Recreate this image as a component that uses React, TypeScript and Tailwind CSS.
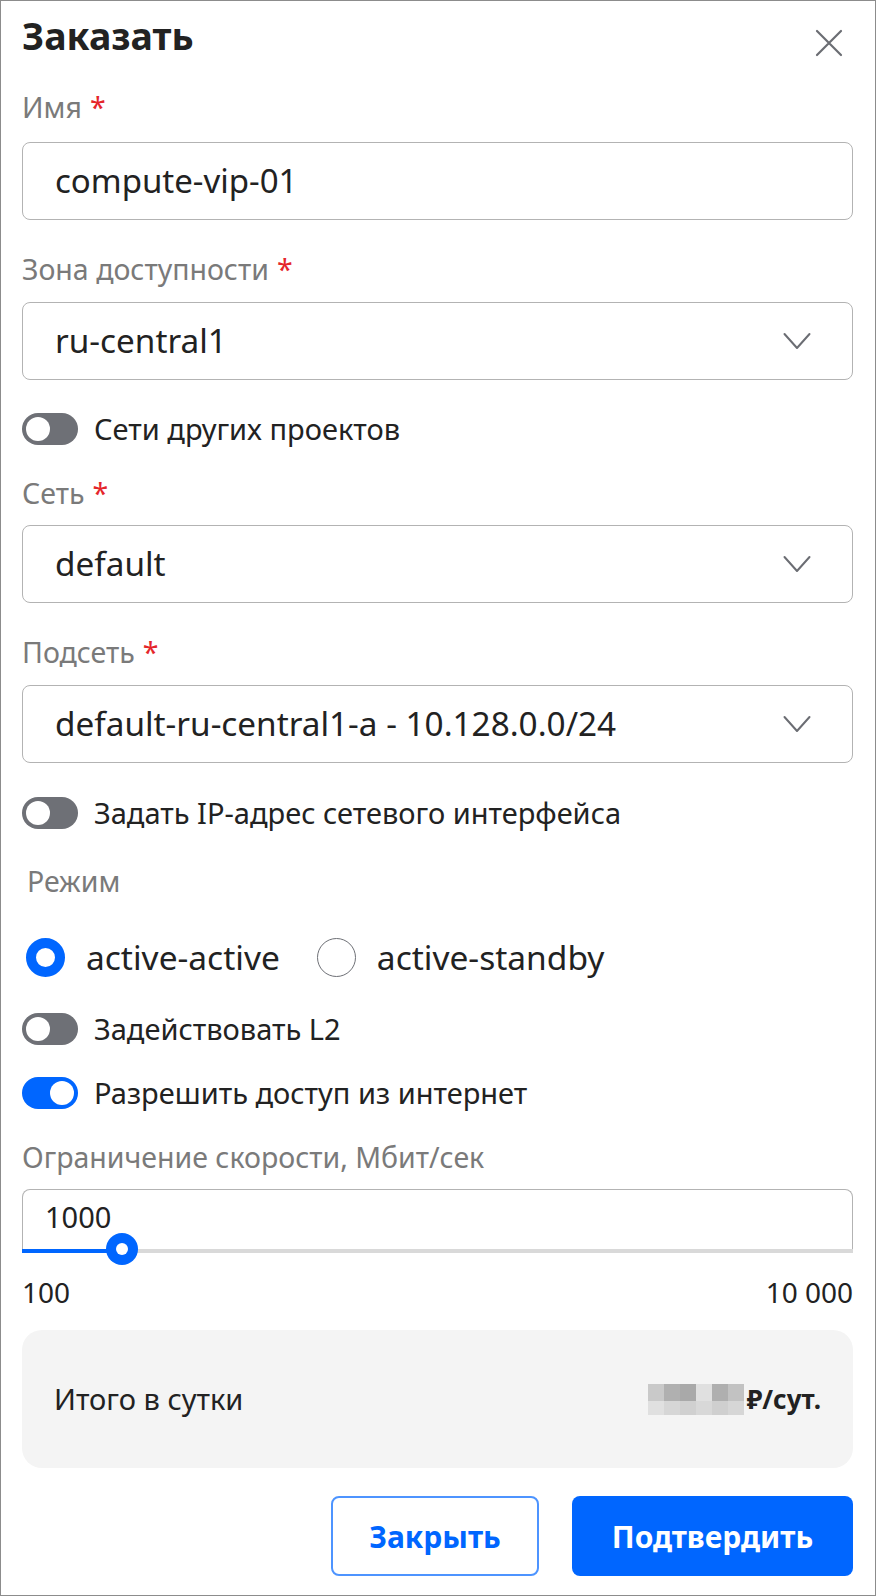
import React from "react";

const font = { fontFamily: '"Noto Sans", "Open Sans", sans-serif' };

function Label({ text, req = true, className = "" }: { text: string; req?: boolean; className?: string }) {
  return (
    <div className={`h-[40px] flex items-center text-[28.5px] text-[#7a7a7a] ${className}`}>
      <span>{text}</span>
      {req && <span className="text-[#e5262b] ml-[8px]">*</span>}
    </div>
  );
}

function Chevron() {
  return (
    <svg width="28" height="18" viewBox="0 0 28 18" fill="none">
      <path d="M1.5 2 L14 16 L26.5 2" stroke="#6b6d73" strokeWidth="2" strokeLinecap="round" strokeLinejoin="round" />
    </svg>
  );
}

function Select({ value, className = "" }: { value: string; className?: string }) {
  return (
    <div className={`h-[78px] rounded-[8px] border border-[#b3b3b3] flex items-center justify-between pl-[32px] pr-[41px] text-[33.3px] text-[#222] ${className}`}>
      <span>{value}</span>
      <Chevron />
    </div>
  );
}

function Toggle({ on, text, className = "" }: { on?: boolean; text: string; className?: string }) {
  return (
    <div className={`h-[32px] flex items-center ${className}`}>
      <div className={`w-[56px] h-[32px] rounded-full flex items-center px-[4px] ${on ? "bg-[#0066ff] justify-end" : "bg-[#6e7076] justify-start"}`}>
        <div className="w-[24px] h-[24px] rounded-full bg-white" />
      </div>
      <span className="ml-[16px] text-[29px] text-[#222]">{text}</span>
    </div>
  );
}

export default function App() {
  const blur = [
    ["#c9c9c9", "#b0b0b0", "#a9a9a9", "#e0e0e0", "#afafaf", "#c2c2c2"],
    ["#e0e0e0", "#d6d6d6", "#d0d0d0", "#d8d8d8", "#cfcfcf", "#d6d6d6"],
  ];
  return (
    <div style={font} className="w-[876px] h-[1596px] bg-white border border-[#8c8c8c] pl-[21px] pr-[22px] flex flex-col">
      {/* header */}
      <div className="h-[70px] flex items-start justify-between">
        <div className="mt-[10px] text-[37.5px] font-bold text-[#222] leading-[50px]">Заказать</div>
        <svg className="mt-[27px] mr-[9px]" width="30" height="30" viewBox="0 0 30 30" fill="none">
          <path d="M3 3 L27 27 M27 3 L3 27" stroke="#6b6d73" strokeWidth="2.2" strokeLinecap="round" />
        </svg>
      </div>

      <Label text="Имя" className="mt-[16px]" />
      <div className="mt-[15px] h-[78px] rounded-[8px] border border-[#b3b3b3] flex items-center pl-[32px] text-[33px] text-[#222]">
        compute-vip-01
      </div>

      <Label text="Зона доступности" className="mt-[29px]" />
      <Select value="ru-central1" className="mt-[13px]" />

      <Toggle text="Сети других проектов" className="mt-[33px]" />

      <Label text="Сеть" className="mt-[28px]" />
      <Select value="default" className="mt-[12px]" />

      <Label text="Подсеть" className="mt-[29px]" />
      <Select value="default-ru-central1-a - 10.128.0.0/24" className="mt-[13px]" />

      <Toggle text="Задать IP-адрес сетевого интерфейса" className="mt-[34px]" />

      <Label text="Режим" req={false} className="mt-[32px] pl-[5px]" />

      <div className="mt-[36px] h-[40px] flex items-center pl-[4px]">
        <div className="w-[39px] h-[39px] rounded-full border-[10px] border-[#0066ff] bg-white" />
        <span className="ml-[21px] text-[33.5px] text-[#222]">active-active</span>
        <div className="ml-[37px] w-[39px] h-[39px] rounded-full border-[1.5px] border-[#6e7076] bg-white" />
        <span className="ml-[21px] text-[33.5px] text-[#222]">active-standby</span>
      </div>

      <Toggle text="Задействовать L2" className="mt-[36px]" />
      <Toggle on text="Разрешить доступ из интернет" className="mt-[32px]" />

      <Label text="Ограничение скорости, Мбит/сек" req={false} className="mt-[28px]" />

      {/* slider input */}
      <div className="mt-[12px] relative h-[64px]">
        <div className="h-[62px] rounded-t-[8px] border border-b-0 border-[#b3b3b3] pl-[22px] pt-[5px] text-[29px] text-[#222]">
          1000
        </div>
        <div className="h-[4px] bg-[#d9d9d9] -mt-[2px] flex">
          <div className="w-[100px] h-[4px] bg-[#0066ff]" />
        </div>
        <div className="absolute left-[84px] top-[44px] w-[32px] h-[32px] rounded-full bg-[#0066ff] flex items-center justify-center">
          <div className="w-[12px] h-[12px] rounded-full bg-white" />
        </div>
      </div>

      <div className="mt-[19px] h-[40px] flex items-center justify-between text-[28px] text-[#222]">
        <span>100</span>
        <span>10 000</span>
      </div>

      {/* total */}
      <div className="mt-[18px] h-[138px] rounded-[20px] bg-[#f4f4f4] flex items-center justify-between pl-[32px] pr-[32px]">
        <span className="text-[29px] text-[#222]">Итого в сутки</span>
        <div className="flex items-center">
          <div className="flex flex-col">
            {blur.map((row, i) => (
              <div key={i} className="flex">
                {row.map((c, j) => (
                  <div key={j} style={{ backgroundColor: c }} className={`w-[16px] ${i === 0 ? "h-[17px]" : "h-[14px]"}`} />
                ))}
              </div>
            ))}
          </div>
          <span className="ml-[3px] text-[26px] font-bold text-[#222]">₽/сут.</span>
        </div>
      </div>

      {/* buttons */}
      <div className="mt-[28px] flex justify-end gap-[33px]">
        <button className="w-[208px] h-[80px] rounded-[8px] border-2 border-[#4d94ff] bg-white text-[#0066ff] text-[30px] font-bold">
          Закрыть
        </button>
        <button className="w-[281px] h-[80px] rounded-[8px] bg-[#0066ff] text-white text-[30px] font-bold">
          Подтвердить
        </button>
      </div>
    </div>
  );
}
